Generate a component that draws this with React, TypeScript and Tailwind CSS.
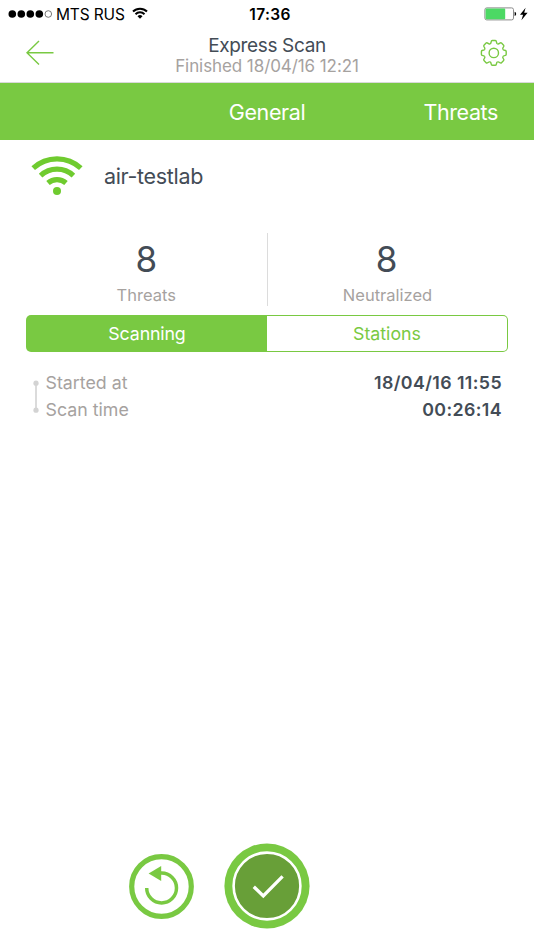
import React, { useState } from "react";

const toothAngles = [0, 45, 90, 135, 180, 225, 270, 315];

const details = [
  { label: "Started at", value: "18/04/16 11:55" },
  { label: "Scan time", value: "00:26:14" },
];

function StatusBar() {
  return (
    <div className="flex h-7 items-center justify-between pl-2 pr-1.5 text-[15.5px] text-black">
      <div className="flex w-[200px] items-center">
        <svg width="44" height="10" viewBox="0 0 44 10">
          <circle cx="4.3" cy="5" r="3.8" />
          <circle cx="13.3" cy="5" r="3.8" />
          <circle cx="22.3" cy="5" r="3.8" />
          <circle cx="31.3" cy="5" r="3.8" />
          <circle cx="40.3" cy="5" r="3.3" fill="none" stroke="#555" strokeWidth="0.8" />
        </svg>
        <span className="mt-px ml-1 w-[76px] tracking-[-0.15px] whitespace-nowrap">MTS RUS</span>
        <svg className="-mt-0.5" width="16" height="12" viewBox="0 0 16 12" fill="none" stroke="#000" strokeWidth="2">
          <path d="M1 4.5A10 10 0 0 1 15 4.5" />
          <path d="M3.5 7.2A6.4 6.4 0 0 1 12.5 7.2" />
          <path d="M8 11.7L5.5 9.2A3.6 3.6 0 0 1 10.5 9.2Z" fill="#000" stroke="none" />
        </svg>
      </div>
      <span className="mt-px pl-1 font-semibold tracking-[0.35px]">17:36</span>
      <div className="flex w-[200px] items-center justify-end">
        <svg width="44" height="14" viewBox="0 0 44 14">
          <rect x="0.9" y="0.9" width="28.6" height="12" rx="1.8" fill="#fff" stroke="#8b8b8b" strokeWidth="1" />
          <rect x="1.6" y="1.6" width="19.6" height="10.6" rx="0.8" fill="#4cd964" />
          <path d="M30.6 4.8Q32.2 5.4 32.2 6.9Q32.2 8.4 30.6 9Z" />
          <path d="M41.6 0.8L36 7.8H39.1L37.4 13.2L43.6 5.8H40.2Z" />
        </svg>
      </div>
    </div>
  );
}

function Header() {
  return (
    <header className="flex h-[55px] items-start justify-between border-b border-[#d9d9d9] px-[26px]">
      <button className="mt-3" aria-label="Back">
        <svg width="28" height="26" viewBox="0 0 28 26" fill="none" stroke="#79c942" strokeWidth="1.4">
          <path d="M27.5 12.8H1M13 1L1 12.8L13 24.6" />
        </svg>
      </button>
      <div className="text-center">
        <h1 className="mt-[7px] text-[19px] leading-[22px] tracking-[-0.35px] text-[#434c56]">Express Scan</h1>
        <p className="-mt-px text-[17px] leading-[21px] tracking-[-0.08px] text-[#a6a29f]">Finished 18/04/16 12:21</p>
      </div>
      <button className="mt-[11px]" aria-label="Settings">
        <svg width="28" height="28" viewBox="-13.8 -13.9 28 28" fill="none" stroke="#79c942" strokeWidth="1.4">
          <circle r="4.7" />
          {toothAngles.map((angle) => (
            <path
              key={angle}
              transform={`rotate(${angle})`}
              d="M-3.75-9.05C-3-9.36-2.8-9.9-2.7-10.8Q-2.5-12.4-1.5-12.4H1.5Q2.5-12.4 2.7-10.8C2.8-9.9 3-9.36 3.75-9.05"
            />
          ))}
        </svg>
      </button>
    </header>
  );
}

export default function App() {
  const [tab, setTab] = useState("scanning");
  const active = "bg-[#79c942] text-white";
  const inactive = "bg-white text-[#79c942]";

  return (
    <main className="flex h-[950px] w-[534px] flex-col bg-white font-['Inter',sans-serif]">
      <StatusBar />
      <Header />
      <nav className="grid h-[56.5px] shrink-0 grid-cols-[1fr_auto_1fr] items-center bg-[#79c942] px-9 pt-px text-[21.5px] tracking-[-0.4px] text-white">
        <span />
        <button>General</button>
        <button className="justify-self-end">Threats</button>
      </nav>

      <div className="flex h-[93px] items-start pl-[31px]">
        <svg className="mt-[15.5px]" width="52" height="41" viewBox="0 0 52 41" fill="none" stroke="#6fcb2f" strokeWidth="5.2">
          <path d="M2.2 13.2A35 35 0 0 1 49.8 13.2" />
          <path d="M9.6 20.6A24 24 0 0 1 42.4 20.6" />
          <path d="M17 28A13.5 13.5 0 0 1 35 28" />
          <circle cx="26" cy="36" r="4" fill="#6fcb2f" stroke="none" />
        </svg>
        <span className="mt-5 ml-[21px] text-[21.5px] leading-8 tracking-[-0.33px] text-[#434c56]">air-testlab</span>
      </div>

      <div className="mx-[26px] grid h-[72px] shrink-0 grid-cols-[240.5px_1px_240px] text-center">
        <div>
          <p className="mt-[5px] text-[35px] leading-[42px] text-[#434c56]">8</p>
          <p className="mt-1 text-[16.5px] leading-[22px] text-[#a6a29f]">Threats</p>
        </div>
        <div className="bg-[#dcdcdc]" />
        <div className="-ml-0.5">
          <p className="mt-[5px] text-[35px] leading-[42px] text-[#434c56]">8</p>
          <p className="mt-1 pl-0.5 text-[16.5px] leading-[22px] text-[#a6a29f]">Neutralized</p>
        </div>
      </div>

      <div className="mx-[26px] mt-[10.5px] grid h-[37px] shrink-0 grid-cols-2 overflow-hidden rounded-[5px] bg-[#79c942] p-px text-[17.8px]">
        <button
          className={`rounded-l-[4px] pt-0.5 tracking-[-0.15px] ${tab === "scanning" ? active : inactive}`}
          onClick={() => setTab("scanning")}
        >
          Scanning
        </button>
        <button
          className={`rounded-r-[4px] pt-0.5 ${tab === "stations" ? active : inactive}`}
          onClick={() => setTab("stations")}
        >
          Stations
        </button>
      </div>

      <div className="mt-[17.5px] flex pr-8 pl-8">
        <svg className="mt-2.5 mr-[5.5px]" width="8" height="34" viewBox="0 0 8 34" fill="#d3d3d3">
          <circle cx="4" cy="3.2" r="2.6" />
          <circle cx="4" cy="30.2" r="2.6" />
          <rect x="3.2" y="3" width="1.6" height="27" />
        </svg>
        <dl className="flex-1">
          {details.map((item) => (
            <div className="flex h-[27px] items-center justify-between text-[17.8px]" key={item.label}>
              <dt className="text-[#a6a29f]">{item.label}</dt>
              <dd className="font-semibold tracking-[0.4px] text-[#434c56]">{item.value}</dd>
            </div>
          ))}
        </dl>
      </div>

      <footer className="mt-auto mb-[21px] flex items-center gap-[30px] pl-[129px]">
        <button aria-label="Rescan">
          <svg width="65" height="65" viewBox="0 0 65 65" fill="none" stroke="#79c942">
            <circle cx="32.5" cy="32.5" r="29.8" strokeWidth="5.2" />
            <path d="M17.7 34A14.9 14.9 0 1 0 32.6 19.1H31" strokeWidth="3.5" />
            <path d="M19.6 19.4L32.2 12V27Z" fill="#79c942" stroke="none" />
          </svg>
        </button>
        <button aria-label="Done">
          <svg width="86" height="86" viewBox="0 0 86 86" fill="none">
            <circle cx="43" cy="43" r="42.6" fill="#79c942" />
            <circle cx="43" cy="43" r="33.4" fill="#689f38" stroke="#fff" strokeWidth="2.6" />
            <path d="M29.8 43.8L39.3 53L58.6 33.4" stroke="#fff" strokeWidth="3.3" />
          </svg>
        </button>
      </footer>
    </main>
  );
}
